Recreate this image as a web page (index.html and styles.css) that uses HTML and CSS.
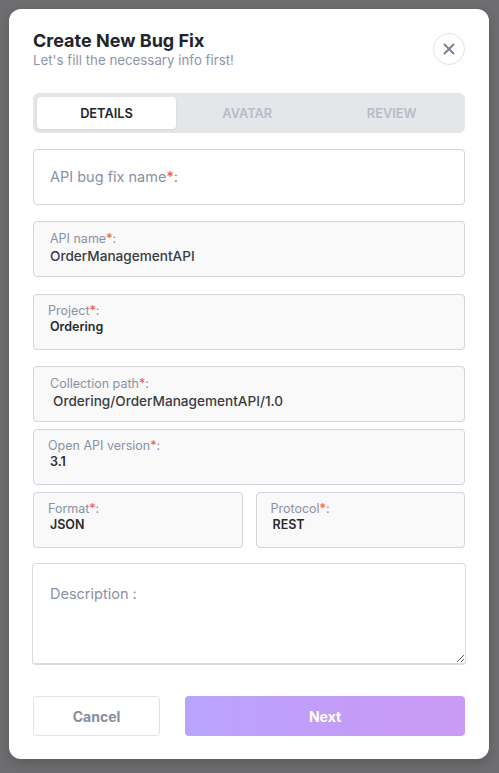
FILE: index.html
```html
<!DOCTYPE html>
<html lang="en">
<head>
<meta charset="utf-8">
<title>Create New Bug Fix</title>
<link rel="stylesheet" href="styles.css">
</head>
<body>
<div class="backdrop">
  <div class="modal">
    <div class="header">
      <div class="heading">
        <h1 class="title">Create New Bug Fix</h1>
        <p class="subtitle">Let's fill the necessary info first!</p>
      </div>
      <button class="close" aria-label="Close">
        <svg width="12" height="12" viewBox="0 0 12 12"><path d="M1.5 1.5 L10.5 10.5 M10.5 1.5 L1.5 10.5" stroke="#7b8195" stroke-width="1.9" stroke-linecap="round" fill="none"/></svg>
      </button>
    </div>

    <div class="tabs">
      <div class="tab tab--active">DETAILS</div>
      <div class="tab">AVATAR</div>
      <div class="tab">REVIEW</div>
    </div>

    <div class="field field--empty">
      <span class="label label--big">API bug fix name<span class="req">*</span>:</span>
    </div>

    <div class="field field--filled field--a gap-16">
      <span class="label">API name<span class="req">*</span>:</span>
      <span class="value">OrderManagementAPI</span>
    </div>

    <div class="field field--filled field--b gap-17">
      <span class="label">Project<span class="req">*</span>:</span>
      <span class="value">Ordering</span>
    </div>

    <div class="field field--filled field--a gap-16">
      <span class="label">Collection path<span class="req">*</span>:</span>
      <span class="value value--indent">Ordering/OrderManagementAPI/1.0</span>
    </div>

    <div class="field field--filled field--b gap-7">
      <span class="label">Open API version<span class="req">*</span>:</span>
      <span class="value">3.1</span>
    </div>

    <div class="row gap-7">
      <div class="field field--filled field--b">
        <span class="label">Format<span class="req">*</span>:</span>
        <span class="value">JSON</span>
      </div>
      <div class="field field--filled field--b">
        <span class="label">Protocol<span class="req">*</span>:</span>
        <span class="value">REST</span>
      </div>
    </div>

    <textarea class="description" placeholder="Description :"></textarea>

    <div class="actions">
      <button class="btn btn--cancel">Cancel</button>
      <button class="btn btn--next">Next</button>
    </div>
  </div>
</div>
</body>
</html>
```

FILE: styles.css
```css
* { box-sizing: border-box; }

html, body {
  margin: 0;
  padding: 0;
  background: #6e6e70;
  font-family: Inter, "Noto Sans", "Liberation Sans", sans-serif;
}

.backdrop {
  padding: 9px 10px 14px 9px;
}

.modal {
  width: 480px;
  height: 750px;
  background: #ffffff;
  border-radius: 12px;
  padding: 21px 24px 23px 24px;
  box-shadow: 0 4px 12px rgba(0, 0, 0, 0.18);
  display: flex;
  flex-direction: column;
}

.header {
  display: flex;
  justify-content: space-between;
  align-items: center;
}

.title {
  margin: 0;
  font-size: 18px;
  line-height: 22px;
  font-weight: 700;
  color: #23242a;
}

.subtitle {
  margin: 0;
  font-size: 13.3px;
  line-height: 16px;
  color: #8f95a7;
}

.close {
  width: 32px;
  height: 32px;
  border-radius: 50%;
  border: 1px solid #e1e2e7;
  background: #fff;
  display: flex;
  align-items: center;
  justify-content: center;
  padding: 0;
}

.tabs {
  margin-top: 25px;
  height: 40px;
  background: #e5e6ea;
  border-radius: 6px;
  padding: 4px;
  display: grid;
  grid-template-columns: 139px 1fr 1fr;
}

.tab {
  display: flex;
  align-items: center;
  justify-content: center;
  font-size: 12.8px;
  font-weight: 600;
  color: #b7bbc6;
  border-radius: 4px;
}

.tab:nth-child(3) { padding-left: 4px; }

.tab--active {
  background: #ffffff;
  color: #24252b;
  box-shadow: 0 1px 3px rgba(0, 0, 0, 0.08);
}

.field {
  border: 1px solid #d2d4dc;
  border-radius: 4px;
  height: 56px;
  display: flex;
  flex-direction: column;
}

.field--empty {
  margin-top: 16px;
  background: #fff;
  justify-content: center;
  padding-left: 16px;
}

.field--filled {
  background: #f9f9fa;
}

.gap-16 { margin-top: 16px; }
.gap-17 { margin-top: 17px; }
.gap-7 { margin-top: 7px; }

.label {
  font-size: 12.5px;
  line-height: 16px;
  color: #8b91a4;
}

.label--big {
  font-size: 14.5px;
  line-height: 18px;
}

.req { color: #f0553b; }

.field--a {
  padding: 9px 16px 0 16px;
}

.field--a .value {
  font-size: 13.6px;
  line-height: 18px;
  font-weight: 500;
  color: #3b3c40;
}

.value--indent { padding-left: 3px; }

.field--b {
  padding: 8px 14px 0 14px;
}

.field--b .value {
  padding-left: 2px;
  font-size: 12.5px;
  line-height: 15px;
  font-weight: 600;
  color: #2a2b2f;
}

.row {
  display: flex;
  gap: 13px;
}

.row .field { flex: 1; }

.description {
  margin: 15px -1px 0 -1px;
  height: 102px;
  border: 1px solid #d8dae0;
  border-bottom: 2px solid #d8dce2;
  border-radius: 4px;
  padding: 21px 17px;
  font-family: Inter, "Noto Sans", "Liberation Sans", sans-serif;
  font-size: 14.5px;
  line-height: 18px;
  color: #3b3c40;
  background: #fff;
  outline: none;
  resize: both;
}

.description::placeholder {
  color: #8b91a4;
}

.actions {
  margin-top: 31px;
  display: flex;
  gap: 25px;
}

.btn {
  height: 40px;
  border-radius: 4px;
  font-family: Inter, "Noto Sans", "Liberation Sans", sans-serif;
  font-size: 14px;
  font-weight: 700;
  cursor: pointer;
}

.btn--cancel {
  width: 127px;
  background: #fff;
  border: 1px solid #e0e2e6;
  color: #878c9f;
}

.btn--next {
  flex: 1;
  border: none;
  color: #ffffff;
  background: linear-gradient(90deg, #b9a4fd 0%, #c49cf8 60%, #ca9bf5 100%);
}
```
